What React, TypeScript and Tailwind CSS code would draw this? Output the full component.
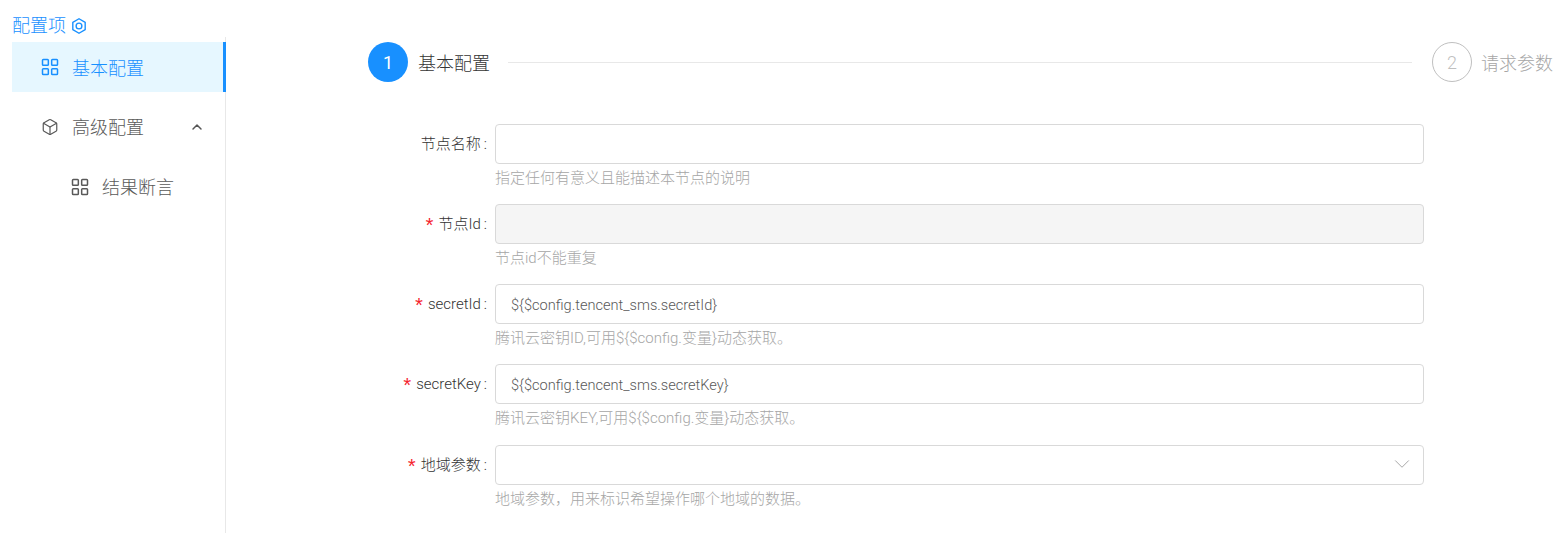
import { Box, ChevronDown, ChevronUp, LayoutGrid } from "lucide-react";
import { clsx } from "clsx";

const fields = [
  { label: "节点名称", help: "指定任何有意义且能描述本节点的说明", value: "" },
  { label: "节点Id", help: "节点id不能重复", value: "", required: true, disabled: true },
  { label: "secretId", help: "腾讯云密钥ID,可用${$config.变量}动态获取。", value: "${$config.tencent_sms.secretId}", required: true },
  { label: "secretKey", help: "腾讯云密钥KEY,可用${$config.变量}动态获取。", value: "${$config.tencent_sms.secretKey}", required: true },
  { label: "地域参数", help: "地域参数，用来标识希望操作哪个地域的数据。", value: "", required: true, select: true },
];

function HexIcon() {
  return (
    <svg width="14" height="16" viewBox="1.5 0.5 13 15" fill="none" stroke="#1890ff" strokeWidth="1.3">
      <path d="M8 1.2 13.8 4.6V11.4L8 14.8 2.2 11.4V4.6Z" strokeLinejoin="round" />
      <circle cx="8" cy="8" r="2.7" />
    </svg>
  );
}

export default function App() {
  return (
    <div
      className="flex h-[533px] w-[1566px] overflow-hidden bg-white text-[15px] font-light"
      style={{ fontFamily: 'Roboto, "Noto Sans CJK SC", sans-serif' }}
    >
      <aside className="flex w-[226px] shrink-0 flex-col pl-3 pt-[14px]">
        <div className="flex h-[23px] items-center gap-[6px] text-[18px] leading-[23px] text-[#1890ff]">
          <span>配置项</span>
          <HexIcon />
        </div>
        <nav className="flex flex-1 flex-col gap-[10px] border-r border-[#e8e8e8] pt-[5px] text-[18px]">
          <div className="-mr-px flex h-[50px] items-center border-r-[3px] border-[#1890ff] bg-[#e6f7ff] pl-[28px] text-[#1890ff]">
            <LayoutGrid size={20} strokeWidth={1.8} className="mr-[12px]" />
            <span className="pt-[2px]">基本配置</span>
          </div>
          <div className="flex h-[50px] items-center pl-[29px] text-[#595959]">
            <Box size={18} strokeWidth={1.6} className="mr-[13px]" />
            <span className="pt-px">高级配置</span>
            <ChevronUp size={16} strokeWidth={2.2} className="ml-[45px] text-[#555555]" />
          </div>
          <div className="flex h-[50px] items-center pl-[58px] text-[#595959]">
            <LayoutGrid size={20} strokeWidth={1.8} className="mr-[12px]" />
            <span className="pt-px">结果断言</span>
          </div>
        </nav>
      </aside>

      <main className="flex min-w-0 flex-1 flex-col pl-[142px] pt-[42px]">
        <div className="flex h-10 items-center text-[18px]">
          <div className="flex size-10 items-center justify-center rounded-full bg-[#1890ff] font-normal text-white">1</div>
          <span className="ml-[10px] w-[70px] whitespace-nowrap pt-[2px] text-[#333333]">基本配置</span>
          <div className="mx-5 h-px w-[904px] bg-[#e8e8e8]" />
          <div className="flex size-10 items-center justify-center rounded-full border border-[#bfbfbf] text-[#bfbfbf]">2</div>
          <span className="ml-[9px] whitespace-nowrap pt-[2px] text-[#a6a6a6]">请求参数</span>
        </div>

        <form className="mt-[42px] flex flex-col">
          {fields.map((field) => (
            <div key={field.label} className="flex h-[80px] items-start last:mt-px">
              <label className="flex h-10 w-[127px] shrink-0 items-center justify-end text-[#333333]">
                {field.required && (
                  <span className="mr-[3px] pt-[8px] text-[20px] leading-none text-[#f5222d]" style={{ fontFamily: '"Liberation Mono", monospace' }}>*</span>
                )}
                <span>{field.label}</span>
                <span className="ml-[3px] mr-2">:</span>
              </label>
              <div className="w-[929px]">
                <div className="relative">
                  <input
                    readOnly
                    disabled={field.disabled}
                    value={field.value}
                    className={clsx(
                      "block h-10 w-full rounded border border-[#d9d9d9] px-[15px] pt-px text-[14.6px] text-[#595959] outline-none",
                      field.disabled ? "bg-[#f5f5f5]" : "bg-white"
                    )}
                  />
                  {field.select && (
                    <ChevronDown size={26} strokeWidth={0.9} className="absolute right-[9px] top-[6px] text-[#a6a6a6]" />
                  )}
                </div>
                <p className="mt-[3px] text-[15px] leading-[22px] text-[#a6a6a6]">{field.help}</p>
              </div>
            </div>
          ))}
        </form>
      </main>
    </div>
  );
}
